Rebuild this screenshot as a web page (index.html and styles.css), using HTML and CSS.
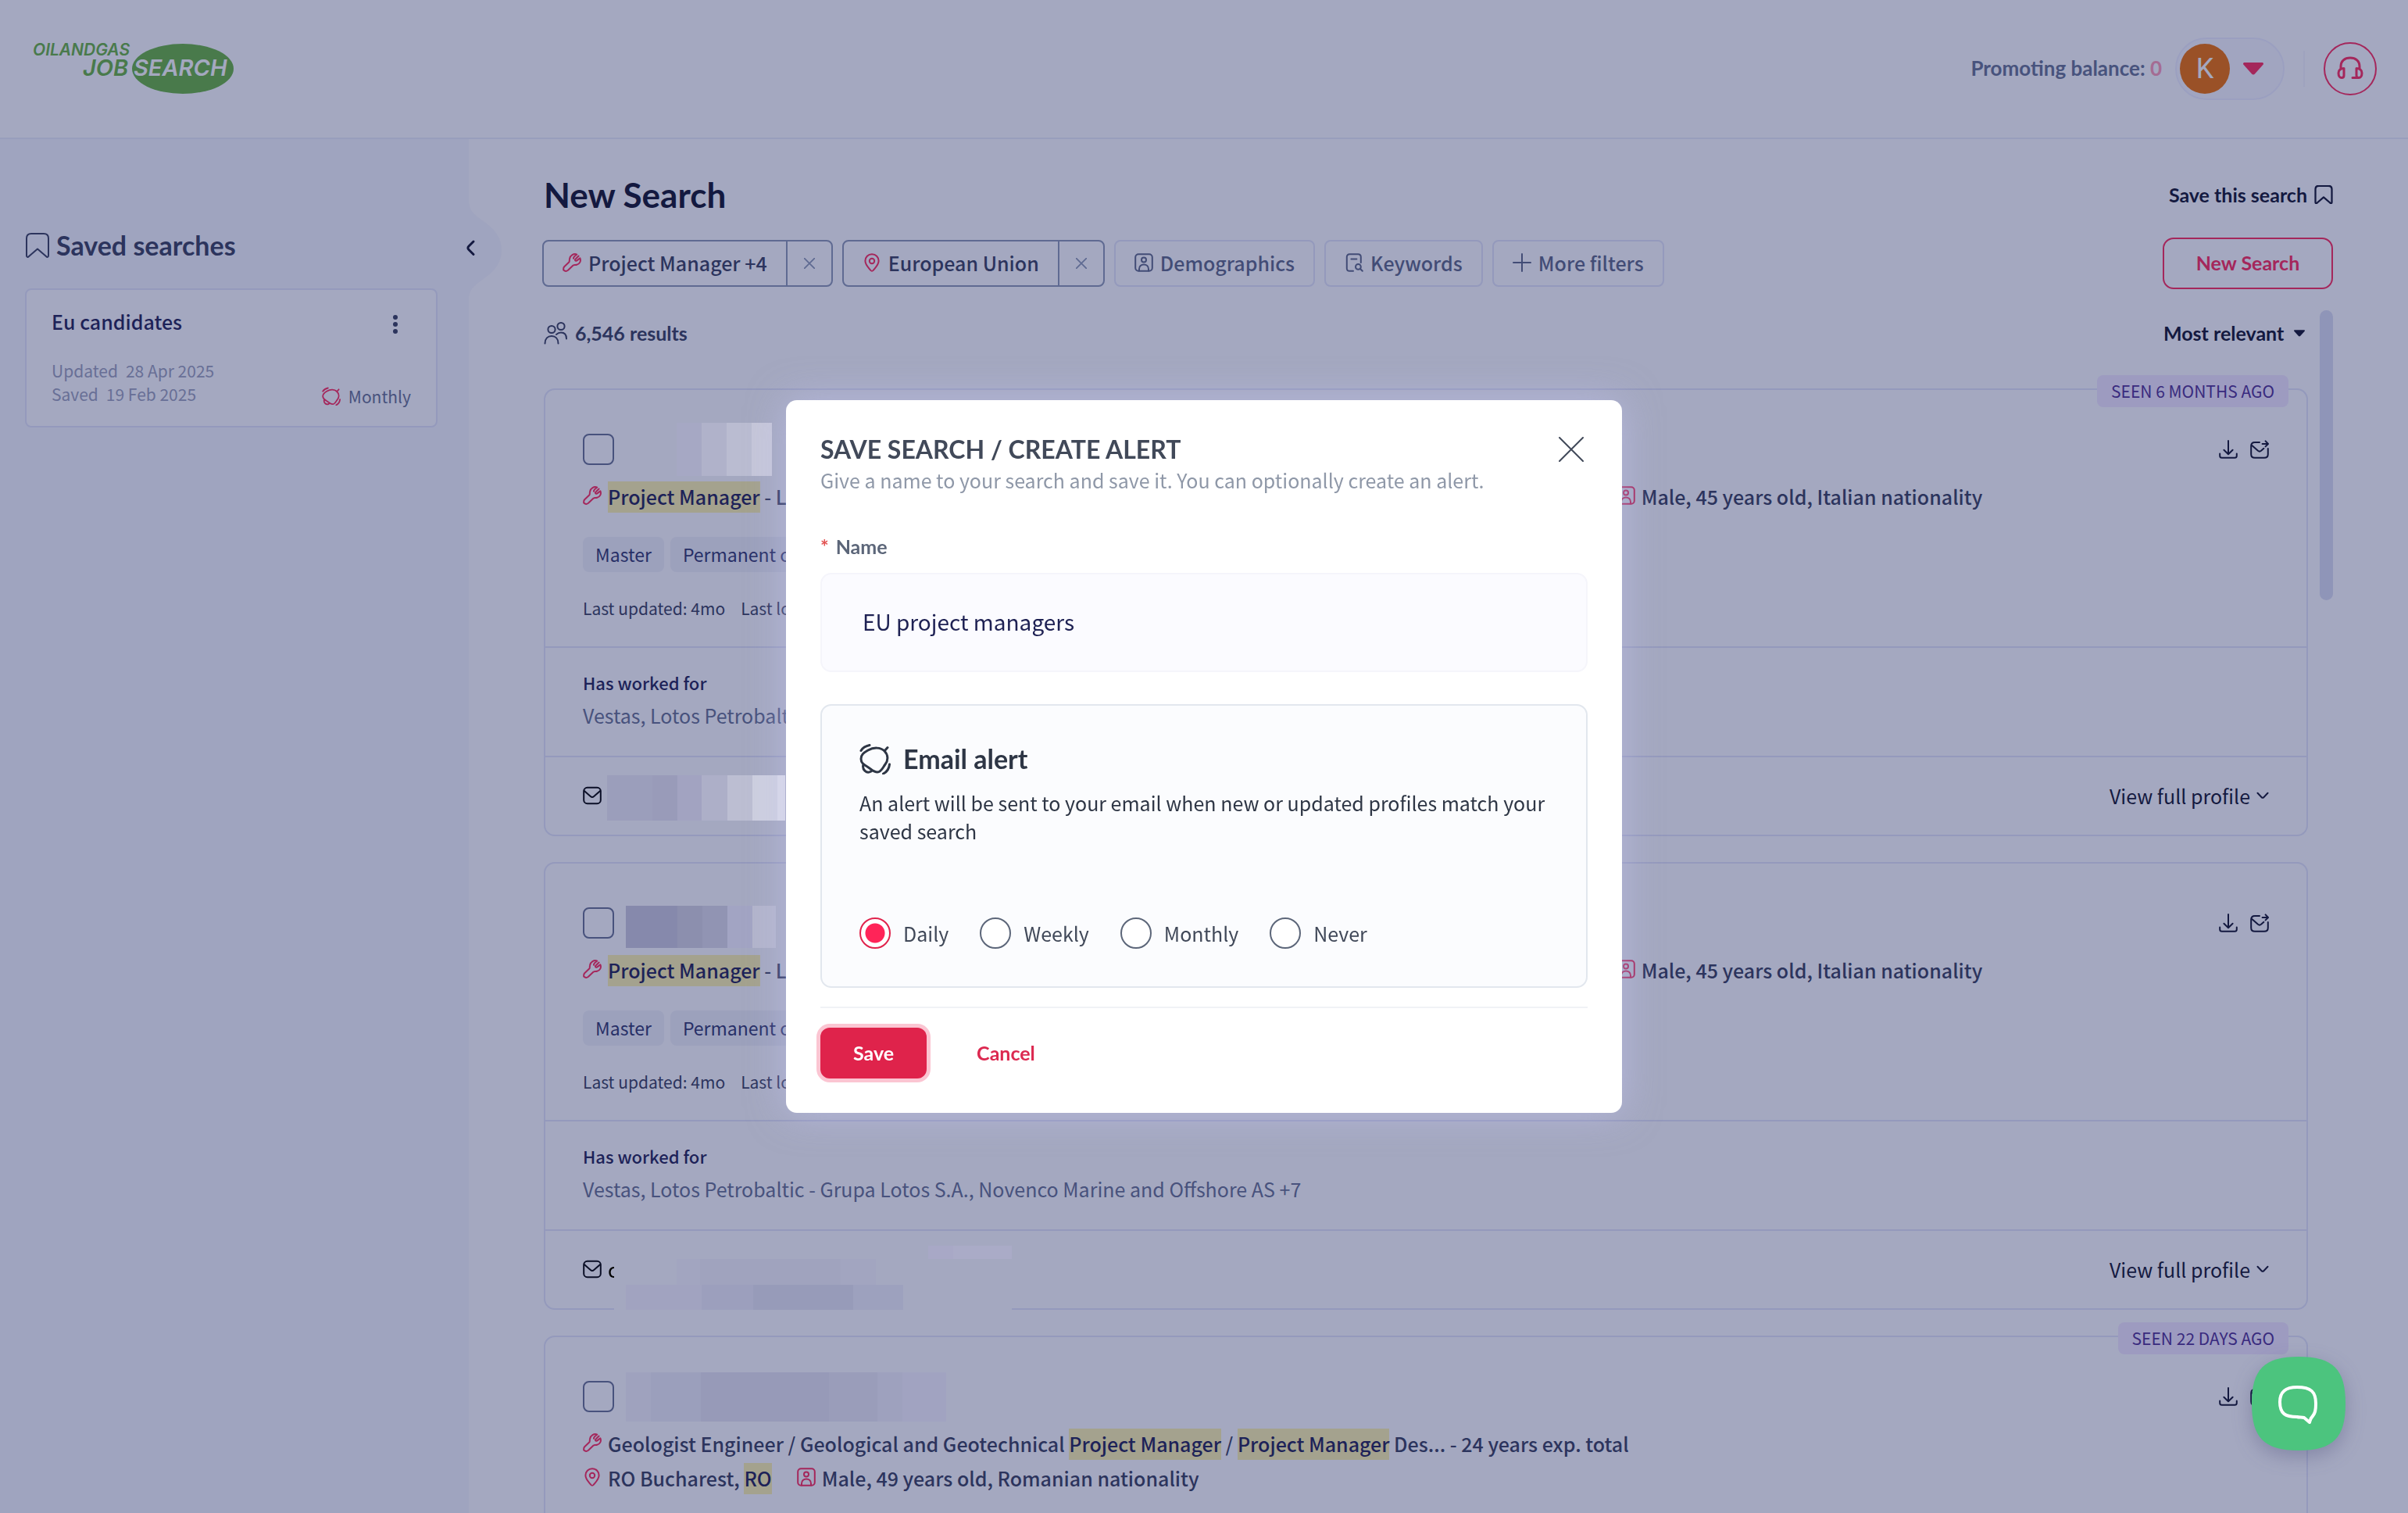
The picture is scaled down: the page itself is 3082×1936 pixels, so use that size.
FILE: index.html
```html
<!DOCTYPE html>
<html lang="en">
<head>
  <meta charset="UTF-8">
  <meta name="viewport" content="width=device-width, initial-scale=1">
  <title>New Search</title>
  <link rel="stylesheet" href="styles.css">
</head>
<body>
  <!-- Icon sprite -->
  <svg class="sprite" aria-hidden="true">
    <symbol id="i-wrench" viewBox="0 0 24 24"><path d="M20.6 3.6 16.8 7.2c-1.600 1.200-.6 3.200 1.200 2.400L22.400 6.400c1.600 3.600-.6 7.600-4.200 8.400-2 .4-3.600-.2-4.600.8L7 21.800c-2 1.600-4.200 1.200-5.800-.2 0-1.600-.4-3 1-4.400l6-5.600c1-1 .4-2.600.8-4.400C9.800 2.800 14.400 0 18.200 1.600c-2 1.600-4.600 3-4.200 5.200"/></symbol>
    <symbol id="i-pin" viewBox="0 0 24 24"><path d="M12 1.2c5 0 8.600 3.800 8.600 8.600 0 5.400-5 9.400-7 12.200-.8 1-2.400 1-3.200 0-2-2.800-7-6.800-7-12.200C3.400 5 7 1.200 12 1.200Z"/><circle cx="12" cy="10" r="3.200"/></symbol>
    <symbol id="i-person" viewBox="0 0 24 24"><rect x="1.200" y="1.200" width="21.600" height="21.600" rx="4"/><circle cx="12" cy="8.600" r="3"/><path d="M6 22.600v-2.400c0-3.600 2.600-5.800 6-5.800s6 2.200 6 5.800v2.400"/></symbol>
    <symbol id="i-doc" viewBox="0 0 24 24"><path d="M11 22.800H6.400c-2.200 0-3.600-1.400-3.600-3.600V4.800c0-2.200 1.400-3.600 3.600-3.600h10.800c2.200 0 3.600 1.400 3.600 3.600V12M8.400 7.600h7"/><circle cx="17.400" cy="17.400" r="3.400"/><path d="m20 20 2.800 2.800"/></symbol>
    <symbol id="i-plus" viewBox="0 0 24 24"><path d="M12 1v22M1 12h22"/></symbol>
    <symbol id="i-x" viewBox="0 0 32 32"><path d="m1 1 30 30M31 1 1 31"/></symbol>
    <symbol id="i-users" viewBox="0 0 30 30"><circle cx="10" cy="10.500" r="4.600"/><circle cx="22" cy="6.500" r="4.600"/><path d="M1.500 28.500c0-6 3.600-9.500 8.500-9.500s8.500 3.500 8.500 9.500M16 17c2-1.800 3.800-2.400 6-2.400 4.400 0 7 3 7 8"/></symbol>
    <symbol id="i-bookmark" viewBox="0 0 32 32"><path d="M8 1h16c4 0 6 2 6 6v22c0 2-1.500 2.500-3 1L16 20.500 5 30c-1.500 1.500-3 1-3-1V7c0-4 2-6 6-6Z"/></symbol>
    <symbol id="i-mail" viewBox="0 0 24 24"><rect x="1.200" y="1.800" width="21.600" height="20.400" rx="4.500"/><path d="m1.800 6 8 7c1.400 1.200 3 1.200 4.400 0l8-7"/></symbol>
    <symbol id="i-forward" viewBox="0 0 24 24"><path d="M12 3H6C3 3 1.200 4.800 1.200 7.600v10.600c0 2.800 1.800 4.600 4.800 4.600h12c3 0 4.800-1.800 4.800-4.600V11M2.600 7.200 10 13.800c1.200 1 2.800 1 4 0l3.400-3M15.600 5h7.200M19.600 1.400 23 5l-3.400 3.400"/></symbol>
    <symbol id="i-download" viewBox="0 0 24 24"><path d="M12 1v17M6.400 12.800 12 18.200l5.600-5.400M1.200 17.400v2.800c0 1.800.8 2.600 2.600 2.600h16.400c1.800 0 2.600-.8 2.600-2.600v-2.800"/></symbol>
    <symbol id="i-down" viewBox="0 0 16 16"><path d="m1.500 4.800 5.200 5.400c.8.800 1.800.8 2.600 0l5.200-5.400"/></symbol>
    <symbol id="i-caret" viewBox="0 0 26 16"><path d="M2 0h22c2 0 2.500 1.500 1.500 2.800L15 14.500c-1.200 1.200-2.800 1.200-4 0L.5 2.800C-.5 1.500 0 0 2 0Z"/></symbol>
    <symbol id="i-alarm" viewBox="0 0 40 40"><path d="M2 9.500C4 6 8 3.500 13 2.500"/><path d="M2 20C2 14 6 12 11 9 18 5 27 5 32 10 37 15 37 22 33 27 30 31 28 37 23 37S15 33 10 30C5 27 2 25 2 20ZM32 10l4-4.500M5 27c-2 7 4 12.500 10 9M38.500 27c-.5 5.500-3 9.500-8 12"/></symbol>
  </svg>

  <!-- Header -->
  <header class="header">
    <a class="logo" href="#" aria-label="Oil and Gas Job Search">
      <svg width="262" height="68" viewBox="0 0 262 68">
        <ellipse class="logo-oval" cx="194" cy="34" rx="65" ry="32"/>
        <text class="logo-text" x="2" y="17" font-size="21">OILANDGAS</text>
        <text class="logo-text" x="66" y="43" font-size="29">JOB</text>
        <text class="logo-text logo-light" x="131" y="43" font-size="29">SEARCH</text>
      </svg>
    </a>
    <div class="header-right">
      <p class="balance">Promoting balance: <span class="balance-count">0</span></p>
      <button class="account" type="button" aria-label="Account menu">
        <span class="avatar">K</span>
        <svg class="account-caret"><use href="#i-caret"/></svg>
      </button>
      <span class="header-divider"></span>
      <button class="support" type="button" aria-label="Support">
        <svg class="headset" width="34" height="34" viewBox="0 0 34 34"><path d="M5 17v-3C5 7 10 3 17 3s12 4 12 11v3M9 16.500c-4 0-7 2-7 6s2 6 4 6c2.500 0 3-1.500 3-3ZM25 16.500c4 0 7 2 7 6s-2 6-4 6c-2.500 0-3-1.500-3-3ZM26 28.500h-6"/></svg>
      </button>
    </div>
  </header>

  <div class="layout">
    <!-- Saved searches -->
    <aside class="sidebar">
      <h2 class="sidebar-title"><svg class="icon-32"><use href="#i-bookmark"/></svg>Saved searches</h2>
      <div class="saved-card">
        <div class="saved-top">
          <a class="saved-name" href="#">Eu candidates</a>
          <button class="dots" type="button" aria-label="Options"><i></i><i></i><i></i></button>
        </div>
        <div class="saved-bottom">
          <div class="saved-dates">
            <p><span>Updated</span><span>28 Apr 2025</span></p>
            <p><span>Saved</span><span>19 Feb 2025</span></p>
          </div>
          <p class="saved-alert"><svg class="icon-24 alarm-small"><use href="#i-alarm"/></svg>Monthly</p>
        </div>
      </div>
      <button class="collapse" type="button" aria-label="Collapse">
        <svg width="42" height="130" viewBox="0 0 42 130">
          <path class="collapse-bulge" d="M0 0C0 16 8 20 20 29 34 39 42 50 42 65S34 91 20 101C8 110 0 114 0 130Z"/>
          <path class="collapse-arrow" d="m6 54-6 6c-1.500 1.500-1.500 3 0 4.500l6 6"/>
        </svg>
      </button>
    </aside>

    <main class="main">
      <div class="title-row">
        <h1>New Search</h1>
        <button class="save-link" type="button">Save this search<svg class="icon-24 thick"><use href="#i-bookmark"/></svg></button>
      </div>

      <!-- Filters -->
      <div class="filter-row">
        <div class="filters">
          <div class="filter active">
            <button class="filter-main" type="button"><svg class="icon-24 pink"><use href="#i-wrench"/></svg>Project Manager +4</button>
            <button class="filter-remove" type="button" aria-label="Remove"><svg><use href="#i-x"/></svg></button>
          </div>
          <div class="filter active">
            <button class="filter-main" type="button"><svg class="icon-24 pink"><use href="#i-pin"/></svg>European Union</button>
            <button class="filter-remove" type="button" aria-label="Remove"><svg><use href="#i-x"/></svg></button>
          </div>
          <div class="filter"><button class="filter-main" type="button"><svg class="icon-24"><use href="#i-person"/></svg>Demographics</button></div>
          <div class="filter"><button class="filter-main" type="button"><svg class="icon-24"><use href="#i-doc"/></svg>Keywords</button></div>
          <div class="filter"><button class="filter-main" type="button"><svg class="icon-24"><use href="#i-plus"/></svg>More filters</button></div>
        </div>
        <button class="new-search" type="button">New Search</button>
      </div>

      <div class="results">
        <div class="results-main">
          <div class="results-bar">
            <p class="count"><svg class="icon-30"><use href="#i-users"/></svg>6,546 results</p>
            <div class="sort">
              <select aria-label="Sort by"><option>Most relevant</option></select>
              <svg class="sort-caret"><use href="#i-caret"/></svg>
            </div>
          </div>

          <article class="card">
            <span class="seen">SEEN 6 MONTHS AGO</span>
            <div class="card-body">
              <div class="card-head">
                <input class="check" type="checkbox" aria-label="Select profile">
                <span class="redact redact-a"></span>
                <div class="actions">
                  <button type="button" aria-label="Download"><svg class="icon-24"><use href="#i-download"/></svg></button>
                  <button type="button" aria-label="Forward"><svg class="icon-24"><use href="#i-forward"/></svg></button>
                </div>
              </div>
              <div class="facts split">
                <p><svg class="icon-24 pink"><use href="#i-wrench"/></svg><span><mark>Project Manager</mark> - L</span></p>
                <p><svg class="icon-24 pink"><use href="#i-person"/></svg><span>Male, 45 years old, Italian nationality</span></p>
              </div>
              <div class="tags"><span>Master</span><span>Permanent contract</span></div>
              <p class="meta"><span>Last updated: 4mo</span><span>Last login</span></p>
            </div>
            <div class="card-work">
              <h3>Has worked for</h3>
              <p>Vestas, Lotos Petrobaltic - Grupa Lotos S.A., Novenco Marine and Offshore AS +7</p>
            </div>
            <div class="card-foot">
              <svg class="icon-24"><use href="#i-mail"/></svg>
              <span class="redact redact-b"></span>
              <a class="view" href="#">View full profile<svg class="icon-16"><use href="#i-down"/></svg></a>
            </div>
          </article>

          <article class="card">
            <div class="card-body">
              <div class="card-head">
                <input class="check" type="checkbox" aria-label="Select profile">
                <span class="redact redact-c"></span>
                <div class="actions">
                  <button type="button" aria-label="Download"><svg class="icon-24"><use href="#i-download"/></svg></button>
                  <button type="button" aria-label="Forward"><svg class="icon-24"><use href="#i-forward"/></svg></button>
                </div>
              </div>
              <div class="facts split">
                <p><svg class="icon-24 pink"><use href="#i-wrench"/></svg><span><mark>Project Manager</mark> - L</span></p>
                <p><svg class="icon-24 pink"><use href="#i-person"/></svg><span>Male, 45 years old, Italian nationality</span></p>
              </div>
              <div class="tags"><span>Master</span><span>Permanent contract</span></div>
              <p class="meta"><span>Last updated: 4mo</span><span>Last login</span></p>
            </div>
            <div class="card-work">
              <h3>Has worked for</h3>
              <p>Vestas, Lotos Petrobaltic - Grupa Lotos S.A., Novenco Marine and Offshore AS +7</p>
            </div>
            <div class="card-foot">
              <svg class="icon-24"><use href="#i-mail"/></svg>
              <span class="contact">c<span class="redact-d"></span></span>
              <a class="view" href="#">View full profile<svg class="icon-16"><use href="#i-down"/></svg></a>
            </div>
          </article>

          <article class="card">
            <span class="seen">SEEN 22 DAYS AGO</span>
            <div class="card-body">
              <div class="card-head">
                <input class="check" type="checkbox" aria-label="Select profile">
                <span class="redact redact-e"></span>
                <div class="actions">
                  <button type="button" aria-label="Download"><svg class="icon-24"><use href="#i-download"/></svg></button>
                  <button type="button" aria-label="Forward"><svg class="icon-24"><use href="#i-forward"/></svg></button>
                </div>
              </div>
              <div class="facts">
                <p><svg class="icon-24 pink"><use href="#i-wrench"/></svg><span>Geologist Engineer / Geological and Geotechnical <mark>Project Manager</mark> / <mark>Project Manager</mark> Des... - 24 years exp. total</span></p>
              </div>
              <div class="facts">
                <p><svg class="icon-24 pink"><use href="#i-pin"/></svg><span>RO Bucharest, <mark>RO</mark></span></p>
                <p><svg class="icon-24 pink"><use href="#i-person"/></svg><span>Male, 49 years old, Romanian nationality</span></p>
              </div>
            </div>
          </article>
        </div>
        <div class="scrollbar"></div>
      </div>
    </main>
  </div>

  <!-- Save search dialog -->
  <div class="overlay"></div>
  <div class="modal-wrap">
    <form class="modal" role="dialog" aria-labelledby="modal-title">
      <div class="modal-head">
        <h2 id="modal-title">SAVE SEARCH / CREATE ALERT</h2>
        <button class="close" type="button" aria-label="Close"><svg class="icon-32"><use href="#i-x"/></svg></button>
      </div>
      <p class="modal-sub">Give a name to your search and save it. You can optionally create an alert.</p>
      <label class="name-label" for="name"><span class="star">*</span><span>Name</span></label>
      <input class="name-input" id="name" type="text" value="EU project managers">
      <section class="alert-box">
        <h3><svg class="icon-40"><use href="#i-alarm"/></svg>Email alert</h3>
        <p>An alert will be sent to your email when new or updated profiles match your saved search</p>
        <div class="radios">
          <label><input type="radio" name="freq" checked>Daily</label>
          <label><input type="radio" name="freq">Weekly</label>
          <label><input type="radio" name="freq">Monthly</label>
          <label><input type="radio" name="freq">Never</label>
        </div>
      </section>
      <div class="modal-foot">
        <button class="save" type="button">Save</button>
        <button class="cancel" type="button">Cancel</button>
      </div>
    </form>
  </div>

  <button class="chat" type="button" aria-label="Chat">
    <svg width="120" height="120" viewBox="0 0 120 120">
      <path class="chat-bg" d="M60 0c44 0 60 16 60 60s-16 60-60 60S0 104 0 60 16 0 60 0Z"/>
      <path class="chat-bubble" d="M58 39c18 0 24 6 24 21 0 9-1 12-4 16-3 3-3 5-4 8l-7-6c-3-1-6 0-9-1-15 0-22-4-22-19 0-13 7-19 22-19Z"/>
    </svg>
  </button>
</body>
</html>
```
FILE: styles.css
```css
:root {
  --pink: #ff2858;
  --navy: #0f122a;
  --slate: #373e5a;
  --line: #e4e7f8;
  --body-font: "Noto Sans CJK SC", "Noto Sans", sans-serif;
  --title-font: Lato, "Open Sans", sans-serif;
}

* {
  margin: 0;
  padding: 0;
  box-sizing: border-box;
}

body {
  display: flex;
  flex-direction: column;
  height: 100vh;
  overflow: hidden;
  background: #fff;
  color: var(--slate);
  font-family: var(--body-font);
  font-size: 25px;
  line-height: 44px;
}

button {
  background: none;
  border: none;
  color: inherit;
  font: inherit;
  cursor: pointer;
}

a {
  color: inherit;
  text-decoration: none;
}

svg {
  display: block;
  flex: none;
  fill: none;
  stroke: currentColor;
  stroke-width: 2;
  stroke-linecap: round;
  stroke-linejoin: round;
}

.sprite {
  position: absolute;
  width: 0;
  height: 0;
}

.icon-16 { width: 16px; height: 16px; }
.icon-24 { width: 24px; height: 24px; }
.icon-30 { width: 30px; height: 30px; }
.icon-32 { width: 32px; height: 32px; }
.icon-40 { width: 40px; height: 40px; stroke-width: 3; }
.pink { color: var(--pink); }
.thick { stroke-width: 3; }

/* Header */
.header {
  flex: none;
  display: flex;
  justify-content: space-between;
  align-items: center;
  height: 178px;
  padding: 0 40px;
  border-bottom: 2px solid #eceef9;
}

.logo svg {
  stroke: none;
}

.logo-oval {
  fill: #68b33d;
}

.logo-text {
  fill: #68b33d;
  font-family: Inter, sans-serif;
  font-style: italic;
  font-weight: 600;
}

.logo-light {
  fill: #fff;
}

.header-right {
  display: flex;
  align-items: center;
}

.balance {
  margin-right: 17px;
  padding-bottom: 2px;
  font: 700 26px/44px var(--title-font);
  color: #66728f;
}

.balance-count {
  color: #ff9bb4;
}

.account {
  display: flex;
  align-items: center;
  gap: 17px;
  width: 140px;
  height: 80px;
  padding: 0 4px;
  border: 2px solid #f0f1ff;
  border-radius: 40px;
  background: #fbfbff;
}

.avatar {
  width: 64px;
  border-radius: 50%;
  background: #ee6f00;
  color: #fff;
  font: 400 36px/64px Roboto, sans-serif;
}

.account-caret {
  width: 26px;
  height: 16px;
  color: var(--pink);
  fill: currentColor;
  stroke: none;
}

.header-divider {
  width: 2px;
  height: 46px;
  margin: 0 24px;
  background: #f6f6fc;
}

.support {
  display: flex;
  align-items: center;
  justify-content: center;
  width: 68px;
  height: 68px;
  border: 2px solid var(--pink);
  border-radius: 50%;
  color: var(--pink);
}

.headset {
  stroke-width: 3;
}

.layout {
  flex: 1;
  display: flex;
  min-height: 0;
}

/* Sidebar */
.sidebar {
  position: relative;
  flex: none;
  width: 600px;
  padding: 116px 40px 0 32px;
  background: #f7f8fd;
}

.sidebar-title {
  display: flex;
  align-items: center;
  gap: 8px;
  font: 700 34px/40px var(--title-font);
}

.saved-card {
  margin-top: 35px;
  padding: 22px 32px 26px;
  border: 2px solid var(--line);
  border-radius: 8px;
  background: #fff;
}

.saved-top,
.saved-bottom {
  display: flex;
  justify-content: space-between;
}

.saved-name {
  font-weight: 500;
  line-height: 36px;
  color: #1e2153;
}

.dots {
  display: flex;
  flex-direction: column;
  align-items: center;
  justify-content: center;
  gap: 3px;
  width: 40px;
  height: 44px;
  margin-bottom: -8px;
}

.dots i {
  width: 6px;
  height: 6px;
  border-radius: 50%;
  background: var(--slate);
}

.saved-bottom {
  align-items: flex-end;
  margin-top: 30px;
  font-size: 21px;
  line-height: 30px;
}

.saved-dates {
  color: #9ba1b9;
}

.saved-dates p {
  display: flex;
  gap: 10px;
}

.saved-alert {
  display: flex;
  align-items: center;
  gap: 10px;
  line-height: 24px;
  color: #66708f;
}

.alarm-small {
  color: var(--pink);
  stroke-width: 3;
}

.collapse {
  position: absolute;
  top: 77px;
  left: 100%;
}

.collapse svg {
  overflow: visible;
}

.collapse-bulge {
  fill: #f7f8fd;
  stroke: none;
}

.collapse-arrow {
  stroke: var(--navy);
  stroke-width: 3;
}

/* Main column */
.main {
  flex: 1;
  min-width: 0;
  padding: 43px 96px 0;
}

.title-row,
.filter-row,
.results-bar {
  display: flex;
  justify-content: space-between;
  align-items: center;
}

.title-row h1 {
  font: 700 44px/56px var(--title-font);
  color: var(--navy);
}

.save-link {
  display: flex;
  align-items: center;
  gap: 9px;
  font: 700 25px/40px var(--title-font);
  color: var(--navy);
}

.filter-row {
  margin: 27px 0 0 -2px;
}

.filters {
  display: flex;
  gap: 12px;
}

.filter {
  display: flex;
  height: 60px;
  border: 2px solid var(--line);
  border-radius: 8px;
  color: #5c6684;
}

.filter.active {
  border-color: #8c98b2;
  color: var(--slate);
}

.filter-main {
  display: flex;
  align-items: center;
  gap: 9px;
  padding: 0 24px 2px;
  font-weight: 500;
}

.filter-remove {
  display: flex;
  align-items: center;
  justify-content: center;
  width: 58px;
  border-left: 2px solid #8c98b2;
  color: #8c98b2;
}

.filter-remove svg {
  width: 14px;
  height: 14px;
  stroke-width: 4;
}

.new-search {
  width: 218px;
  height: 66px;
  padding-bottom: 2px;
  border: 2px solid var(--pink);
  border-radius: 14px;
  color: var(--pink);
  font: 700 25px/40px var(--title-font);
}

.results {
  display: flex;
  gap: 15px;
  margin-top: 27px;
}

.results-main {
  flex: 1;
  min-width: 0;
}

.scrollbar {
  width: 17px;
  height: 371px;
  border-radius: 9px;
  background: #dddff2;
}

.results-bar {
  height: 60px;
  margin-bottom: 40px;
  padding-bottom: 2px;
}

.count {
  display: flex;
  align-items: center;
  gap: 10px;
  font: 700 25px/40px var(--title-font);
}

.sort {
  display: flex;
  align-items: center;
  gap: 12px;
  padding-right: 4px;
}

.sort select {
  appearance: none;
  border: none;
  background: none;
  font: 700 25px/40px var(--title-font);
  color: var(--navy);
}

.sort-caret {
  width: 14px;
  height: 9px;
  color: var(--navy);
  fill: currentColor;
  stroke: none;
}

/* Profile cards */
.card {
  position: relative;
  margin-bottom: 33px;
  border: 2px solid var(--line);
  border-radius: 14px;
}

.seen {
  position: absolute;
  top: -19px;
  right: 23px;
  padding: 0 18px;
  border-radius: 8px;
  background: #f3e9ff;
  color: #4e2d91;
  font-size: 21px;
  line-height: 41px;
}

.card-body {
  padding: 56px 48px 34px;
}

.card-head {
  display: flex;
  align-items: center;
  height: 40px;
  margin-bottom: 18px;
}

.check {
  appearance: none;
  flex: none;
  width: 40px;
  height: 40px;
  border: 2px solid #66708f;
  border-radius: 8px;
}

.actions {
  display: flex;
  gap: 16px;
  margin-left: auto;
  color: var(--navy);
}

.facts {
  display: flex;
  gap: 32px;
  font-weight: 500;
}

.facts.split {
  display: grid;
  grid-template-columns: 19fr 12fr;
  gap: 0;
}

.facts p {
  display: flex;
  gap: 8px;
}

.facts svg {
  margin-top: 9px;
}

mark {
  padding: 1px 0 3px;
  background: #fff5ac;
  color: #1e2153;
}

.tags {
  display: flex;
  gap: 8px;
  margin-top: 30px;
}

.tags span {
  padding: 0 16px;
  border-radius: 8px;
  background: #f2f3f9;
  color: #30366b;
  font-size: 23px;
  line-height: 45px;
}

.meta {
  display: flex;
  gap: 20px;
  margin-top: 31px;
  font-size: 21px;
  line-height: 30px;
}

.card-work {
  padding: 24px 48px 30px;
  border-top: 2px solid var(--line);
  color: #66708f;
}

.card-work h3 {
  font-size: 22px;
  font-weight: 500;
  line-height: 40px;
  color: #1e2153;
}

.card-foot {
  display: flex;
  align-items: center;
  height: 101px;
  padding: 0 48px 2px;
  border-top: 2px solid var(--line);
  color: #000;
}

.view {
  display: flex;
  align-items: center;
  gap: 8px;
  margin-left: auto;
  color: var(--navy);
}

/* Pixelated personal data, painted above the dimming layer */
.redact {
  position: relative;
  z-index: 20;
}

.redact-a {
  width: 122px;
  height: 68px;
  margin-left: 80px;
  background: linear-gradient(90deg, #a6a8c4 32px, #b0b2ca 32px 64px, #babcd1 64px 96px, #c5c6d9 96px);
}

.redact-b {
  width: 228px;
  height: 58px;
  margin: 6px 0 0 7px;
  background: linear-gradient(90deg, #9b9ebb 58px, #999bb9 58px 90px, #a2a3c1 90px 121px, #adafc8 121px 154px, #bcbed2 154px 186px, #cdcfdf 186px 218px, #d8d9e6 218px);
}

.redact-c {
  width: 192px;
  height: 54px;
  margin: 10px 0 0 15px;
  background: linear-gradient(90deg, #8689ac 66px, #8c8fae 66px 98px, #9194b3 98px 130px, #a2a4c3 130px 162px, #b2b4cb 162px);
}

.contact {
  position: relative;
  z-index: 20;
  margin-left: 8px;
}

.redact-d {
  position: absolute;
  top: -8px;
  left: 8px;
  width: 509px;
  height: 82px;
  background:
    linear-gradient(90deg, transparent 402px, #a8a8c6 402px 434px, #aaabc7 434px) 0 0 / 100% 17px no-repeat,
    linear-gradient(90deg, transparent 80px, #a2a5c0 80px 110px, #a0a3be 110px 290px, #a2a5c0 290px 335px, transparent 335px) 0 17px / 100% 33px no-repeat,
    linear-gradient(90deg, transparent 15px, #a1a3c0 15px 112px, #9c9fbd 112px 178px, #979bb9 178px 306px, #9da1be 306px 370px, transparent 370px) 0 100% / 100% 32px no-repeat,
    #a4a8c0;
}

.redact-e {
  width: 410px;
  height: 63px;
  margin-left: 15px;
  background: linear-gradient(90deg, #9fa2be 32px, #9b9fbc 32px 96px, #979ab8 96px 260px, #9a9dba 260px 322px, #9ea1be 322px 354px, #a1a3c1 354px);
}

/* Modal */
.overlay {
  position: fixed;
  inset: 0;
  z-index: 10;
  background: rgba(28, 38, 98, 0.4);
}

.modal-wrap {
  position: fixed;
  inset: 0;
  z-index: 30;
  display: flex;
  align-items: center;
  justify-content: center;
}

.modal {
  width: 1070px;
  padding: 42px 44px 44px;
  border-radius: 14px;
  background: #fff;
  box-shadow: 0 0 48px rgba(200, 200, 250, 0.5);
  color: #414959;
}

.modal-head {
  display: flex;
  justify-content: space-between;
  align-items: center;
  height: 42px;
}

.modal-head h2 {
  font: 700 32px/40px var(--title-font);
}

.close {
  padding: 0 5px;
}

.modal-sub {
  line-height: 36px;
  color: #8f98a8;
}

.name-label {
  display: flex;
  gap: 9px;
  margin-top: 52px;
  font: 700 25px/30px var(--title-font);
  color: #5c6679;
}

.star {
  color: #e2504f;
}

.name-input {
  display: block;
  width: 100%;
  height: 127px;
  margin-top: 19px;
  padding: 0 52px 4px;
  border: 2px solid #f5f5fb;
  border-radius: 14px;
  background: #fbfbff;
  color: #1e2153;
  font: 400 28px/40px var(--body-font);
}

.alert-box {
  margin-top: 41px;
  padding: 48px;
  border: 2px solid #e2e7ee;
  border-radius: 14px;
  background: #fbfcfe;
}

.alert-box h3 {
  display: flex;
  align-items: center;
  gap: 16px;
  font: 700 34px/40px var(--title-font);
  color: #2e3645;
}

.alert-box p {
  margin-top: 18px;
  line-height: 36px;
  color: #2e3645;
}

.radios {
  display: flex;
  gap: 40px;
  margin-top: 93px;
}

.radios label {
  display: flex;
  align-items: center;
  gap: 16px;
  line-height: 40px;
}

.radios input {
  appearance: none;
  width: 40px;
  height: 40px;
  border: 2px solid #5c6679;
  border-radius: 50%;
  background: #fff;
}

.radios input:checked {
  border-color: #e0234c;
  background: radial-gradient(circle, #ff2458 12px, #fff 13px);
}

.modal-foot {
  display: flex;
  gap: 64px;
  margin-top: 24px;
  padding-top: 25px;
  border-top: 2px solid #f0f2f6;
}

.modal-foot button {
  height: 65px;
  padding-bottom: 2px;
  font: 700 25px/40px var(--title-font);
}

.save {
  padding: 0 42px;
  border-radius: 12px;
  background: #df234b;
  box-shadow: 0 0 0 5px #fbc5d2;
  color: #fff;
}

.cancel {
  color: #dc2950;
}

.chat {
  position: fixed;
  right: 80px;
  bottom: 80px;
  z-index: 40;
  filter: drop-shadow(0 8px 12px rgba(60, 60, 110, 0.3));
}

.chat-bg {
  fill: #4cc47e;
  stroke: none;
}

.chat-bubble {
  stroke: #fff;
  stroke-width: 4;
}
```
